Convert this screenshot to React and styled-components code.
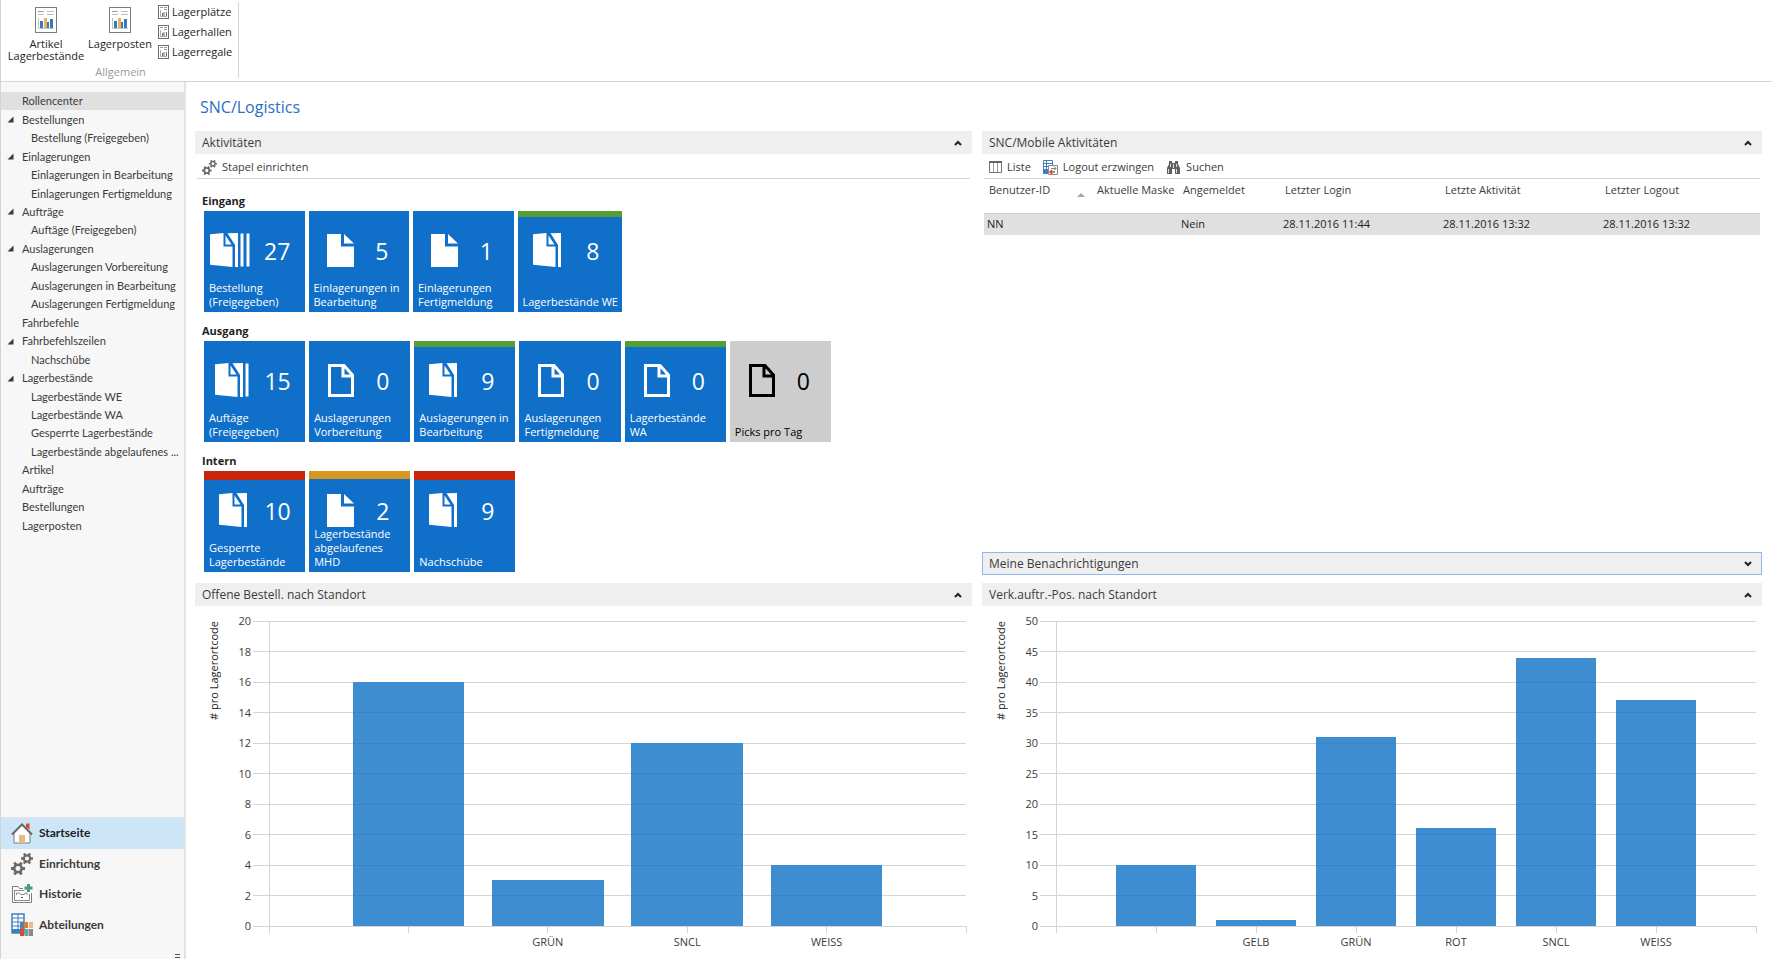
import React from 'react';
import styled, { createGlobalStyle } from 'styled-components';

const colors = {
	text: '#3b3b3b',
	dark: '#1e1e1e',
	muted: '#9a9a9a',
	line: '#d4d4d4',
	panel: '#efefef',
	nav: '#f7f7f7',
	selected: '#e0e0e0',
	active: '#cde6f7',
	tile: '#0f6fc9',
	bar: '#3f8dd1',
	title: '#2b6fbf',
	red: '#c4250c',
	orange: '#d9961c',
	green: '#559e34',
};

const GlobalStyle = createGlobalStyle`
	* {
		box-sizing: border-box;
	}
	body {
		margin: 0;
		background: #fff;
		color: ${colors.text};
		font-family: 'Open Sans', 'Noto Sans', sans-serif;
		font-size: 11px;
		line-height: 14px;
	}
	button {
		font: inherit;
		color: inherit;
		background: none;
		border: 0;
		padding: 0;
		cursor: pointer;
	}
	a {
		color: inherit;
		text-decoration: none;
	}
	svg {
		display: block;
		flex: none;
	}
`;

const Page = styled.div`
	display: flex;
	flex-direction: column;
	min-height: 100vh;
	border-left: 1px solid ${colors.line};
`;

// Ribbon

const Ribbon = styled.header`
	display: flex;
	height: 82px;
	padding: 2px 0 3px;
	border-bottom: 1px solid ${colors.line};
	color: ${colors.dark};
`;

const RibbonGroup = styled.section`
	display: flex;
	flex-direction: column;
	justify-content: space-between;
	align-items: center;
	padding: 0 6px 0 8px;
	border-right: 1px solid ${colors.line};
`;

const RibbonItems = styled.div`
	display: flex;
	height: 60px;
`;

const BigButton = styled.button`
	display: flex;
	flex-direction: column;
	align-items: center;
	gap: 5px;
	width: 74px;
	line-height: 12px;
	padding-top: 5px;
`;

const SmallButtons = styled.div`
	display: grid;
	grid-auto-rows: 20px;
	align-content: start;
	padding-left: 1px;
`;

const SmallButton = styled.button`
	display: flex;
	align-items: center;
	gap: 3px;
`;

const GroupName = styled.span`
	line-height: 12px;
	color: ${colors.muted};
`;

// Navigation

const Body = styled.div`
	display: flex;
	flex: 1;
`;

const Sidebar = styled.nav`
	display: flex;
	flex-direction: column;
	justify-content: space-between;
	width: 185px;
	flex: none;
	padding-top: 10px;
	font-family: Lato, 'Open Sans', sans-serif;
	background: ${colors.nav};
	border-right: 2px solid #e2e2e2;
`;

const Tree = styled.div`
	display: grid;
	grid-template-columns: minmax(0, 1fr);
	grid-auto-rows: 1fr;
	height: 443px;
`;

const TreeItem = styled.a`
	display: flex;
	align-items: center;
	padding-left: ${(props) => (props.$child ? 30 : 6)}px;
	white-space: nowrap;
	background: ${(props) => (props.$selected ? colors.selected : 'none')};
`;

const Twisty = styled.span`
	display: flex;
	width: 15px;
`;

const AreasWrap = styled.div`
	position: relative;
`;

const Areas = styled.div`
	display: grid;
	grid-auto-rows: 1fr;
	height: 142px;
	padding-bottom: 19px;
	border-top: 1px solid #e4e4e4;
`;

const Area = styled.a`
	display: flex;
	align-items: center;
	gap: 6px;
	padding-left: 10px;
	font-size: 12px;
	font-weight: 700;
	background: ${(props) => (props.$active ? colors.active : 'none')};
	color: ${(props) => (props.$active ? colors.dark : colors.text)};
`;

const MoreButton = styled.button`
	position: absolute;
	right: 4px;
	bottom: 0;
`;

// Content

const Main = styled.main`
	display: flex;
	flex-direction: column;
	flex: 1;
	min-width: 0;
	padding: 13px 10px 3px 9px;
`;

const Title = styled.h1`
	margin: 0 0 12px 5px;
	font-size: 16px;
	line-height: 24px;
	font-weight: 400;
	color: ${colors.title};
`;

const Columns = styled.div`
	display: grid;
	grid-template-columns: minmax(0, 777fr) minmax(0, 780fr);
	grid-template-rows: auto 1fr;
	gap: 8px 10px;
	flex: 1;
`;

const Column = styled.div`
	display: flex;
	flex-direction: column;
	justify-content: space-between;
`;

const Panel = styled.section`
	display: flex;
	flex-direction: column;
`;

const PanelHeader = styled.button`
	display: flex;
	align-items: center;
	justify-content: space-between;
	height: 23px;
	padding: 0 9px 0 6px;
	font-size: 12px;
	background: ${colors.panel};
	border: 1px solid ${(props) => (props.$focused ? '#8cb8ee' : colors.panel)};
`;

const Toolbar = styled.div`
	display: flex;
	align-items: center;
	gap: 12px;
	height: 25px;
	margin: 0 2px;
	padding: 2px 0 0 5px;
	border-bottom: 1px solid ${colors.line};
`;

const ToolButton = styled.button`
	display: flex;
	align-items: center;
	gap: 5px;
`;

// Tiles

const TileGroups = styled.div`
	display: grid;
	gap: 12px;
	padding: 15px 0 3px 9px;
`;

const GroupTitle = styled.h3`
	margin: 0 0 3px -2px;
	font-size: 11px;
	line-height: 14px;
	font-weight: 700;
	color: ${colors.dark};
`;

const TileRow = styled.div`
	display: grid;
	grid-template-columns: repeat(6, 1fr);
	gap: 4px;
	width: 627px;
`;

const statusHeight = { red: 9, orange: 8, green: 6 };

const TileButton = styled.button`
	display: flex;
	flex-direction: column;
	justify-content: space-between;
	height: 101px;
	padding: 22px 4px 3px;
	text-align: left;
	color: ${(props) => (props.$plain ? '#000' : '#fff')};
	background: ${(props) => (props.$plain ? '#cdcdcd' : colors.tile)};
	${(props) =>
		props.$status &&
		`box-shadow: inset 0 ${statusHeight[props.$status]}px ${colors[props.$status]};`}
`;

const TileValue = styled.div`
	display: flex;
	align-items: center;
	width: 100%;
	height: 34px;
`;

const Count = styled.span`
	flex: 1;
	padding: 2px 4px 0 0;
	font-size: 23px;
	text-align: center;
`;

const TileLabel = styled.span`
	display: flex;
	flex-direction: column;
	justify-content: flex-end;
	height: 0;
	flex: 1;
	padding-left: 1px;
	line-height: 14px;
	white-space: nowrap;
`;

// Table

const Table = styled.table`
	width: calc(100% - 4px);
	margin: 0 2px;
	table-layout: fixed;
	border-collapse: collapse;
`;

const Th = styled.th`
	width: ${(props) => (props.$width ? `${props.$width}px` : 'auto')};
	height: 34px;
	padding: 4px 0 0 5px;
	text-align: left;
	vertical-align: top;
	font-weight: 400;
	white-space: nowrap;
`;

const ThContent = styled.span`
	display: flex;
	justify-content: space-between;
	align-items: flex-end;
	padding-right: 7px;
`;

const Td = styled.td`
	height: 22px;
	padding: 0 0 0 3px;
	color: ${colors.dark};
	background: ${colors.selected};
	border-top: 1px solid #cfcfcf;
`;

// Charts

const ChartArea = styled.div`
	display: flex;
	flex: 1;
	min-height: 340px;
	padding: 15px 6px 30px 12px;
`;

const AxisTitle = styled.span`
	writing-mode: vertical-rl;
	transform: rotate(180deg);
	text-align: right;
	width: 14px;
	margin-right: 48px;
	color: ${colors.dark};
`;

const Plot = styled.svg`
	flex: 1;
	min-width: 0;
	height: 305px;
	overflow: visible;
	font-size: 11px;
	fill: ${colors.text};

	line {
		stroke: ${colors.line};
		shape-rendering: crispEdges;
	}
	rect {
		fill: ${colors.bar};
		shape-rendering: crispEdges;
	}
	line.over {
		stroke: #3a84c5;
	}
`;

const ReportIcon = () => (
	<svg width="22" height="26" viewBox="0 0 22 26">
		<rect x=".5" y=".5" width="21" height="25" fill="#fff" stroke="#7c7c7c" />
		<path d="M3 4.500h6M3 7.500h6M12 4.500h7M12 7.500h7" stroke="#b9bfc4" />
		<path d="M3 4.500h5" stroke="#7ea0c4" />
		<path d="M3.500 11v10.500H19" fill="none" stroke="#b9c6d2" />
		<path d="M5 14h3v7H5zM15 12h3v9h-3z" fill="#3c78b8" />
		<path d="M9 11h3v10H9z" fill="#e9b558" />
		<path d="M12 15h2v6h-2z" fill="#3c78b8" />
	</svg>
);

const SmallReportIcon = () => (
	<svg width="11" height="14" viewBox="0 0 11 14">
		<rect x=".5" y=".5" width="10" height="13" fill="#fff" stroke="#6d6d6d" />
		<path d="M2 2.500h3M6 2.500h3M6 4.500h3" stroke="#9a9a9a" />
		<path d="M2.500 5v6.500H9" fill="none" stroke="#a9a9a9" />
		<path d="M4 8h1v3H4zM8 7h1v4H8z" fill="#3c78b8" />
		<path d="M5 7h2v4H5z" fill="#e9a94e" />
	</svg>
);

const Gear = ({ x, y, r }) => (
	<g transform={`translate(${x} ${y}) scale(${r / 6})`}>
		<circle r="3.500" fill="none" stroke="currentColor" strokeWidth="2.400" />
		<path
			d="M4 0H6.500M-4 0H-6.500M2-3.500 3.300-5.600M-2 3.500-3.300 5.600M2 3.500 3.300 5.600M-2-3.500-3.300-5.600"
			stroke="currentColor"
			strokeWidth="2.600"
		/>
	</g>
);

const GearsIcon = ({ size }) => (
	<svg width={size} height={size} viewBox="0 0 22 22" color="#6a6a6a">
		<Gear x={7} y={15.5} r={6.5} />
		<Gear x={16} y={5.5} r={5.5} />
	</svg>
);

const HomeIcon = () => (
	<svg width="22" height="22" viewBox="0 0 22 22">
		<path d="M15 1.500h3.500v6L15 5z" fill="#d9492f" />
		<path d="M3 11v10h16V11l-8-8z" fill="#fff" stroke="#7a7a7a" />
		<path d="M8 13h6v8H8z" fill="#e6bd80" />
		<path d="M1 12.500 11 2.500l10 10" fill="none" stroke="#666" strokeWidth="2" />
	</svg>
);

const HistoryIcon = () => (
	<svg width="22" height="22" viewBox="0 0 22 22">
		<path d="M12 5.500H8.500L7 3.500H1.500v16h19V10" fill="#fff" stroke="#7d7d7d" />
		<path d="M3.500 7.500h10M3.500 7v10.500h15V11" fill="none" stroke="#8c8c8c" />
		<path d="M5.500 12V10h3l1 1.500h4L14 10h2v2" fill="none" stroke="#8c8c8c" />
		<path d="M10 14.500h2" stroke="#555" />
		<path d="M17.500 1v8M13.500 5h8" stroke="#4d9a80" strokeWidth="3" />
	</svg>
);

const DepartmentsIcon = () => (
	<svg width="22" height="23" viewBox="0 0 22 23">
		<path d="M1 1h12v19H1z" fill="#fff" stroke="#3f7fc0" strokeWidth="1.500" />
		<path d="M1 5h12M1 9h12M1 13h12M7 1v19" stroke="#3f7fc0" />
		<path d="M1 16h9v4H1z" fill="#3f7fc0" />
		<path d="M9 9h4v7H9z" fill="#5a7fa8" />
		<path d="M13 9h4v6h-4z" fill="#dd7a35" />
		<path d="M18 9h4v6h-4z" fill="#e6bd80" />
		<path d="M9 16h4v7H9z" fill="#d9492f" />
		<path d="M13.500 16h4v7h-4z" fill="#6aa693" />
		<path d="M18 16h4v7h-4z" fill="#8a8a8a" />
	</svg>
);

const ListIcon = () => (
	<svg width="13" height="12" viewBox="0 0 13 12">
		<path d="M.5.5h12v11H.5z" fill="#fff" stroke="#777" />
		<path d="M0 1h13" stroke="#666" strokeWidth="2" />
		<path d="M4.500 2v9M8.500 2v9" stroke="#999" />
	</svg>
);

const LogoutIcon = () => (
	<svg width="15" height="15" viewBox="0 0 15 15">
		<path d="M.5.5h9v13h-9z" fill="#fff" stroke="#3f7fc0" />
		<path d="M0 3.500h10M0 6.500h10M0 9.500h10M3.500 0v14" stroke="#3f7fc0" />
		<path d="M0 10h5v4H0z" fill="#3f7fc0" />
		<path d="M5.500 5.500h9v9h-9z" fill="#fff" stroke="#8a8a8a" />
		<path d="M8 8.500h5M11 6.500l2 2-2 2" fill="none" stroke="#4d9a80" />
		<path d="M12 12H7M9 10l-2 2 2 2" fill="none" stroke="#d9492f" strokeWidth="1.500" />
	</svg>
);

const BinocularsIcon = () => (
	<svg width="15" height="13" viewBox="0 0 15 13" fill="#606060">
		<path d="M3 0h3v2h3V0h3v3l2 4v6H9V8H6v5H1V7l2-4z" />
		<path d="M2.500 8v4M4.500 3v3M10.500 8v4M10.500 3v3M7.500 3v4" stroke="#fff" strokeWidth=".8" />
	</svg>
);

const Chevron = ({ down }) => (
	<svg width="8" height="6" viewBox="0 0 8 6">
		<path
			d={down ? 'M1 1l3 3 3-3' : 'M1 5l3-3 3 3'}
			fill="none"
			stroke="#222"
			strokeWidth="2"
		/>
	</svg>
);

// Front sheet of a stack, drawn from x = 0
const StackFront = () => (
	<>
		<path d="M0 1.300 13.500 0V13.500H22.500V34L0 31.700Z" />
		<path d="M15.500 2.500V11.500H21.500Z" />
		<path d="M17.500.3 28 0V34H25V12Z" />
	</>
);

const TileIcon = ({ kind }) => (
	<svg width="50" height="34" viewBox="0 0 50 34" fill="currentColor">
		{kind === 'single' && (
			<>
				<path d="M14 1H28V13.500H41V34H14Z" />
				<path d="M31 1V10.500H41Z" />
			</>
		)}
		{kind === 'empty' && (
			<path
				d="M16.500 2.500H31L39.500 12V32.500H16.500ZM30 2.500V13H39.500"
				fill="none"
				stroke="currentColor"
				strokeWidth="3"
			/>
		)}
		{kind === 'stack' && (
			<g transform="translate(11 0)">
				<StackFront />
			</g>
		)}
		{kind === 'stack2' && (
			<g transform="translate(7 0)">
				<StackFront />
				<path d="M30.500 .5h3v33h-3z" />
			</g>
		)}
		{kind === 'stack3' && (
			<g transform="translate(2 0)">
				<StackFront />
				<path d="M30.500 .5h3v33h-3zM36.500 .5h3v33h-3z" />
			</g>
		)}
	</svg>
);

const tree = [
	{ name: 'Rollencenter', selected: true },
	{ name: 'Bestellungen', open: true },
	{ name: 'Bestellung (Freigegeben)', child: true },
	{ name: 'Einlagerungen', open: true },
	{ name: 'Einlagerungen in Bearbeitung', child: true },
	{ name: 'Einlagerungen Fertigmeldung', child: true },
	{ name: 'Aufträge', open: true },
	{ name: 'Auftäge (Freigegeben)', child: true },
	{ name: 'Auslagerungen', open: true },
	{ name: 'Auslagerungen Vorbereitung', child: true },
	{ name: 'Auslagerungen in Bearbeitung', child: true },
	{ name: 'Auslagerungen Fertigmeldung', child: true },
	{ name: 'Fahrbefehle' },
	{ name: 'Fahrbefehlszeilen', open: true },
	{ name: 'Nachschübe', child: true },
	{ name: 'Lagerbestände', open: true },
	{ name: 'Lagerbestände WE', child: true },
	{ name: 'Lagerbestände WA', child: true },
	{ name: 'Gesperrte Lagerbestände', child: true },
	{ name: 'Lagerbestände abgelaufenes ...', child: true },
	{ name: 'Artikel' },
	{ name: 'Aufträge' },
	{ name: 'Bestellungen' },
	{ name: 'Lagerposten' },
];

const tileGroups = [
	{
		title: 'Eingang',
		tiles: [
			{ label: ['Bestellung', '(Freigegeben)'], count: 27, kind: 'stack3' },
			{ label: ['Einlagerungen in', 'Bearbeitung'], count: 5, kind: 'single' },
			{ label: ['Einlagerungen', 'Fertigmeldung'], count: 1, kind: 'single' },
			{ label: ['Lagerbestände WE'], count: 8, kind: 'stack', status: 'green' },
		],
	},
	{
		title: 'Ausgang',
		tiles: [
			{ label: ['Auftäge', '(Freigegeben)'], count: 15, kind: 'stack2' },
			{ label: ['Auslagerungen', 'Vorbereitung'], count: 0, kind: 'empty' },
			{ label: ['Auslagerungen in', 'Bearbeitung'], count: 9, kind: 'stack', status: 'green' },
			{ label: ['Auslagerungen', 'Fertigmeldung'], count: 0, kind: 'empty' },
			{ label: ['Lagerbestände', 'WA'], count: 0, kind: 'empty', status: 'green' },
			{ label: ['Picks pro Tag'], count: 0, kind: 'empty', plain: true },
		],
	},
	{
		title: 'Intern',
		tiles: [
			{ label: ['Gesperrte', 'Lagerbestände'], count: 10, kind: 'stack', status: 'red' },
			{
				label: ['Lagerbestände', 'abgelaufenes', 'MHD'],
				count: 2,
				kind: 'single',
				status: 'orange',
			},
			{ label: ['Nachschübe'], count: 9, kind: 'stack', status: 'red' },
		],
	},
];

const orders = [
	{ name: '', value: 16 },
	{ name: 'GRÜN', value: 3 },
	{ name: 'SNCL', value: 12 },
	{ name: 'WEISS', value: 4 },
];

const sales = [
	{ name: '', value: 10 },
	{ name: 'GELB', value: 1 },
	{ name: 'GRÜN', value: 31 },
	{ name: 'ROT', value: 16 },
	{ name: 'SNCL', value: 44 },
	{ name: 'WEISS', value: 37 },
];

const BarChart = ({ data, step }) => {
	const max = step * 10;
	const slots = data.length + 1;
	const x = (i) => (i * 100) / slots;
	const y = (value) => 100 - (value * 100) / max;
	const ticks = Array.from({ length: 11 }, (_, i) => i * step);

	return (
		<ChartArea>
			<AxisTitle># pro Lagerortcode</AxisTitle>
			<Plot>
				{ticks.map((t) => (
					<React.Fragment key={t}>
						<line x1="-16" x2="100%" y1={`${y(t)}%`} y2={`${y(t)}%`} />
						<text x="-18" y={`${y(t)}%`} dy="4" textAnchor="end">
							{t}
						</text>
					</React.Fragment>
				))}
				<line x1="0" x2="0" y1="0" y2="100%" />
				{Array.from({ length: slots + 1 }, (_, i) => (
					<svg key={i} x={`${x(i)}%`} y="100%" overflow="visible">
						<line x1="0" x2="0" y1="0" y2="7" />
					</svg>
				))}
				{data.map((d, i) => (
					<React.Fragment key={i}>
						<rect
							x={`${x(i + 0.6)}%`}
							y={`${y(d.value)}%`}
							width={`${x(0.8)}%`}
							height={`${100 - y(d.value)}%`}
						/>
						{ticks
							.filter((t) => t > 0 && t < d.value)
							.map((t) => (
								<line
									key={t}
									className="over"
									x1={`${x(i + 0.6)}%`}
									x2={`${x(i + 1.4)}%`}
									y1={`${y(t)}%`}
									y2={`${y(t)}%`}
								/>
							))}
						<text x={`${x(i + 1)}%`} y="100%" dy="20" textAnchor="middle">
							{d.name}
						</text>
					</React.Fragment>
				))}
			</Plot>
		</ChartArea>
	);
};

const Header = ({ title, closed, focused }) => (
	<PanelHeader type="button" aria-expanded={!closed} $focused={focused}>
		{title}
		<Chevron down={closed} />
	</PanelHeader>
);

const Tile = ({ label, count, kind, status, plain }) => (
	<TileButton type="button" $status={status} $plain={plain}>
		<TileValue>
			<TileIcon kind={kind} />
			<Count>{count}</Count>
		</TileValue>
		<TileLabel>
			{label.map((line) => (
				<span key={line}>{line}</span>
			))}
		</TileLabel>
	</TileButton>
);

const App = () => (
	<Page>
		<GlobalStyle />
		<Ribbon>
			<RibbonGroup>
				<RibbonItems>
					<BigButton type="button">
						<ReportIcon />
						<span>
							Artikel
							<br />
							Lagerbestände
						</span>
					</BigButton>
					<BigButton type="button">
						<ReportIcon />
						<span>Lagerposten</span>
					</BigButton>
					<SmallButtons>
						{['Lagerplätze', 'Lagerhallen', 'Lagerregale'].map((name) => (
							<SmallButton type="button" key={name}>
								<SmallReportIcon />
								{name}
							</SmallButton>
						))}
					</SmallButtons>
				</RibbonItems>
				<GroupName>Allgemein</GroupName>
			</RibbonGroup>
		</Ribbon>
		<Body>
			<Sidebar>
				<Tree>
					{tree.map((item, i) => (
						<TreeItem key={i} href="#" $child={item.child} $selected={item.selected}>
							{!item.child && (
								<Twisty>
									{item.open && (
										<svg width="7" height="7" viewBox="0 0 7 7">
											<path d="M6.500 .5v6H.5z" fill="#3b3b3b" />
										</svg>
									)}
								</Twisty>
							)}
							{item.name}
						</TreeItem>
					))}
				</Tree>
				<AreasWrap>
					<Areas>
						<Area href="#" $active>
							<HomeIcon />
							Startseite
						</Area>
						<Area href="#">
							<GearsIcon size={22} />
							Einrichtung
						</Area>
						<Area href="#">
							<HistoryIcon />
							Historie
						</Area>
						<Area href="#">
							<DepartmentsIcon />
							Abteilungen
						</Area>
					</Areas>
					<MoreButton type="button" aria-label="Mehr">
						<svg width="5" height="5" viewBox="0 0 5 5">
							<path d="M0 .5h5M0 3.500h5" stroke="#555" />
						</svg>
					</MoreButton>
				</AreasWrap>
			</Sidebar>
			<Main>
				<Title>SNC/Logistics</Title>
				<Columns>
					<Panel>
						<Header title="Aktivitäten" />
						<Toolbar>
							<ToolButton type="button">
								<GearsIcon size={15} />
								Stapel einrichten
							</ToolButton>
						</Toolbar>
						<TileGroups>
							{tileGroups.map((group) => (
								<section key={group.title}>
									<GroupTitle>{group.title}</GroupTitle>
									<TileRow>
										{group.tiles.map((tile, i) => (
											<Tile key={i} {...tile} />
										))}
									</TileRow>
								</section>
							))}
						</TileGroups>
					</Panel>
					<Column>
						<Panel>
							<Header title="SNC/Mobile Aktivitäten" />
							<Toolbar>
								<ToolButton type="button">
									<ListIcon />
									Liste
								</ToolButton>
								<ToolButton type="button">
									<LogoutIcon />
									Logout erzwingen
								</ToolButton>
								<ToolButton type="button">
									<BinocularsIcon />
									Suchen
								</ToolButton>
							</Toolbar>
							<Table>
								<thead>
									<tr>
										<Th $width={108}>
											<ThContent>
												Benutzer-ID
												<svg width="8" height="4" viewBox="0 0 8 4">
													<path d="M0 4l4-4 4 4z" fill="#a6a6a6" />
												</svg>
											</ThContent>
										</Th>
										<Th $width={86}>Aktuelle Maske</Th>
										<Th $width={102}>Angemeldet</Th>
										<Th $width={160}>Letzter Login</Th>
										<Th $width={160}>Letzte Aktivität</Th>
										<Th>Letzter Logout</Th>
									</tr>
								</thead>
								<tbody>
									<tr>
										<Td>NN</Td>
										<Td />
										<Td>Nein</Td>
										<Td>28.11.2016 11:44</Td>
										<Td>28.11.2016 13:32</Td>
										<Td>28.11.2016 13:32</Td>
									</tr>
								</tbody>
							</Table>
						</Panel>
						<Panel>
							<Header title="Meine Benachrichtigungen" closed focused />
						</Panel>
					</Column>
					<Panel>
						<Header title="Offene Bestell. nach Standort" />
						<BarChart data={orders} step={2} />
					</Panel>
					<Panel>
						<Header title="Verk.auftr.-Pos. nach Standort" />
						<BarChart data={sales} step={5} />
					</Panel>
				</Columns>
			</Main>
		</Body>
	</Page>
);

export default App;
